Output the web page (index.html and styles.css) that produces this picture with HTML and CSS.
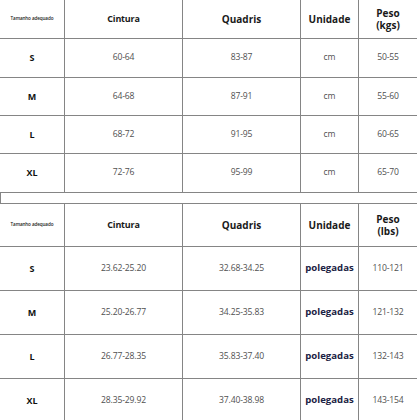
FILE: index.html
```html
<!DOCTYPE html>
<html>
<head>
<meta charset="utf-8">
<link rel="stylesheet" href="styles.css">
</head>
<body>
<div class="sheet">
  <div class="tbl t1">
    <div class="c h tiny">Tamanho adequado</div>
    <div class="c h narrow">Cintura</div>
    <div class="c h">Quadris</div>
    <div class="c h">Unidade</div>
    <div class="c h last two">Peso<br>(kgs)</div>

    <div class="c sz">S</div><div class="c n">60-64</div><div class="c n">83-87</div><div class="c n">cm</div><div class="c n last">50-55</div>
    <div class="c sz">M</div><div class="c n">64-68</div><div class="c n">87-91</div><div class="c n">cm</div><div class="c n last">55-60</div>
    <div class="c sz">L</div><div class="c n">68-72</div><div class="c n">91-95</div><div class="c n">cm</div><div class="c n last">60-65</div>
    <div class="c sz">XL</div><div class="c n">72-76</div><div class="c n">95-99</div><div class="c n">cm</div><div class="c n last">65-70</div>
  </div>
  <div class="spacer"></div>
  <div class="tbl t2">
    <div class="c h tiny">Tamanho adequado</div>
    <div class="c h narrow">Cintura</div>
    <div class="c h">Quadris</div>
    <div class="c h">Unidade</div>
    <div class="c h last two">Peso<br>(lbs)</div>

    <div class="c sz">S</div><div class="c n">23.62-25.20</div><div class="c n">32.68-34.25</div><div class="c u">polegadas</div><div class="c n last">110-121</div>
    <div class="c sz">M</div><div class="c n">25.20-26.77</div><div class="c n">34.25-35.83</div><div class="c u">polegadas</div><div class="c n last">121-132</div>
    <div class="c sz">L</div><div class="c n">26.77-28.35</div><div class="c n">35.83-37.40</div><div class="c u">polegadas</div><div class="c n last">132-143</div>
    <div class="c sz">XL</div><div class="c n">28.35-29.92</div><div class="c n">37.40-38.98</div><div class="c u">polegadas</div><div class="c n last">143-154</div>
  </div>
</div>
</body>
</html>
```

FILE: styles.css
```css
html, body {
  margin: 0;
  padding: 0;
  background: #ffffff;
}
body {
  font-family: "Open Sans", "Noto Sans", sans-serif;
  color: #222;
  overflow: hidden;
}
.sheet {
  width: 417px;
}
.tbl {
  display: grid;
  grid-template-columns: 65px 118px 118px 58px 58px;
}
.t1 {
  grid-template-rows: 39px 39px 38px 38px 39px;
}
.t2 {
  grid-template-rows: 43px 44px 44px 44px 44px;
}
.c {
  box-sizing: border-box;
  border-right: 1px solid #858585;
  border-bottom: 1px solid #858585;
  display: flex;
  align-items: center;
  justify-content: center;
  text-align: center;
  line-height: 1.1;
}
.c.last {
  border-right: none;
}
.spacer {
  height: 11px;
  box-sizing: border-box;
  border-left: 1px solid #858585;
  border-bottom: 1px solid #858585;
}
.h {
  font-weight: 700;
  font-size: 10px;
  color: #1a1a1a;
}
.h.two {
  line-height: 1.25;
}
.h.narrow {
  font-size: 9px;
  letter-spacing: -0.2px;
}
.h.tiny {
  font-size: 4.6px;
  font-weight: 600;
  letter-spacing: -0.1px;
}
.sz {
  font-weight: 700;
  font-size: 9px;
  color: #111;
}
.n {
  font-size: 8.6px;
  color: #505050;
  letter-spacing: -0.15px;
}
.u {
  font-weight: 700;
  font-size: 9.6px;
  color: #1c2244;
}
```
